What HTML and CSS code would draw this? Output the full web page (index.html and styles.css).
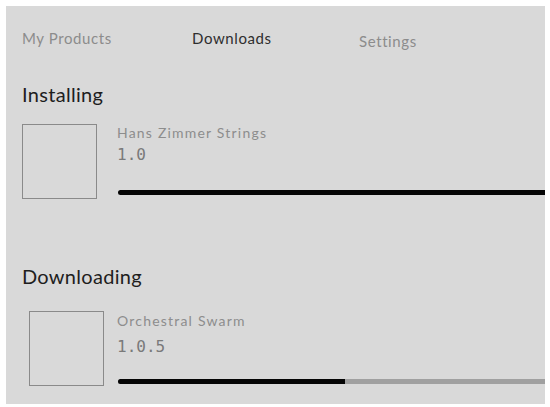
FILE: index.html
```
<!DOCTYPE html>
<html>
<head>
<meta charset="utf-8">
<link rel="stylesheet" href="styles.css">
</head>
<body>
<div class="panel">
  <nav class="tabs">
    <span class="tab">My Products</span>
    <span class="tab tab-active">Downloads</span>
    <span class="tab tab-low">Settings</span>
  </nav>
  <h2 class="heading">Installing</h2>
  <div class="item">
    <div class="thumb"></div>
    <div class="info">
      <div class="title">Hans Zimmer Strings</div>
      <div class="version">1.0</div>
      <div class="bar"><div class="fill" style="width:100%"></div></div>
    </div>
  </div>
  <h2 class="heading heading-second">Downloading</h2>
  <div class="item item-second">
    <div class="thumb thumb-shift"></div>
    <div class="info info-second">
      <div class="title">Orchestral Swarm</div>
      <div class="version version-second">1.0.5</div>
      <div class="bar bar-second"><div class="fill" style="width:227px"></div></div>
    </div>
  </div>
</div>
</body>
</html>
```
FILE: styles.css
```
html, body { margin: 0; padding: 0; background: #ffffff; }
body { font-family: "Lato", "Noto Sans", sans-serif; }
.panel {
  margin: 6px;
  width: 539px;
  height: 398px;
  background: #d9d9d9;
  overflow: hidden;
  box-sizing: border-box;
  padding: 22px 0 0 16px;
}
.tabs { display: grid; grid-template-columns: 170px 167px 150px; height: 20px; }
.tab { font-size: 15px; line-height: 20px; letter-spacing: 0.6px; color: #8c8c8c; }
.tab-active { color: #2e2e2e; }
.tab-low { margin-top: 3px; }
.heading {
  margin: 34px 0 0 0;
  font-size: 20px;
  line-height: 24px;
  letter-spacing: 0.3px;
  font-weight: 400;
  color: #1e1e1e;
}
.heading-second { margin-top: 65px; }
.item {
  margin-top: 18px;
  display: grid;
  grid-template-columns: 95px 1fr;
}
.item-second { margin-top: 23px; }
.thumb {
  width: 73px;
  height: 73px;
  border: 1px solid #8a8a8a;
}
.thumb-shift { margin-left: 7px; }
.info { padding-top: 1px; }
.info-second { padding-top: 2px; }
.title { font-size: 14px; line-height: 16px; letter-spacing: 1.2px; color: #8d8d8d; }
.version {
  margin-top: 5px;
  font-family: "DejaVu Sans Mono", "Liberation Mono", monospace;
  font-size: 16px;
  line-height: 18px;
  color: #7a7a7a;
}
.version-second { margin-top: 9px; }
.bar {
  margin-top: 26px;
  margin-left: 1px;
  width: 440px;
  height: 5px;
  background: #a0a0a0;
  border-radius: 3px 0 0 3px;
  overflow: hidden;
}
.bar-second { margin-top: 23px; }
.fill { height: 100%; background: #050505; }
```
